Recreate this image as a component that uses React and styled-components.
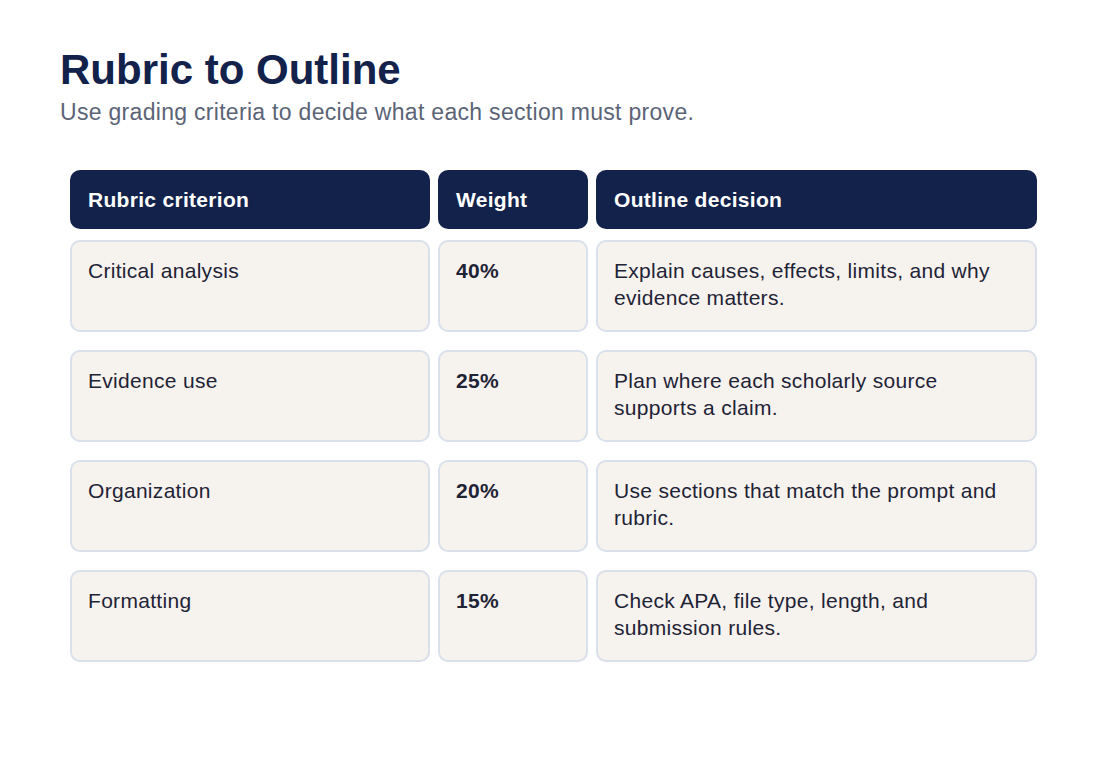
import React from 'react';
import styled, { createGlobalStyle } from 'styled-components';

const GlobalStyle = createGlobalStyle`
  body {
    margin: 0;
    background: #ffffff;
    font-family: "Liberation Sans", Arial, sans-serif;
  }
`;

const Page = styled.div`
  padding: 45px 60px 0;
`;

const Title = styled.h1`
  margin: 0;
  font-size: 42px;
  line-height: 50px;
  font-weight: 700;
  color: #12224b;
`;

const Subtitle = styled.p`
  margin: 3px 0 0;
  font-size: 23px;
  line-height: 28px;
  letter-spacing: 0.3px;
  color: #5b6476;
`;

const Table = styled.div`
  margin: 44px 0 0 10px;
  display: grid;
  grid-template-columns: 360px 150px 441px;
  column-gap: 8px;
  row-gap: 18px;
`;

const HeaderRow = styled.div`
  display: contents;
`;

const Row = styled.div`
  display: contents;
`;

const HeadCell = styled.div`
  box-sizing: border-box;
  height: 59px;
  margin-bottom: -7px;
  padding: 0 18px;
  display: flex;
  align-items: center;
  background: #12224b;
  border-radius: 10px;
  color: #ffffff;
  font-size: 21px;
  letter-spacing: 0.3px;
  font-weight: 700;
`;

const Cell = styled.div`
  box-sizing: border-box;
  height: 92px;
  padding: 15px 16px;
  background: #f6f3ee;
  border: 2px solid #d9e0eb;
  border-radius: 10px;
  color: #1f2336;
  font-size: 21px;
  line-height: 27px;
  letter-spacing: 0.3px;
  font-weight: ${({ strong }) => (strong ? 700 : 400)};
`;

const rows = [
  { criterion: 'Critical analysis', weight: '40%', decision: 'Explain causes, effects, limits, and why evidence matters.' },
  { criterion: 'Evidence use', weight: '25%', decision: 'Plan where each scholarly source supports a claim.' },
  { criterion: 'Organization', weight: '20%', decision: 'Use sections that match the prompt and rubric.' },
  { criterion: 'Formatting', weight: '15%', decision: 'Check APA, file type, length, and submission rules.' }
];

export default function App() {
  return (
    <>
      <GlobalStyle />
      <Page>
        <Title>Rubric to Outline</Title>
        <Subtitle>Use grading criteria to decide what each section must prove.</Subtitle>
        <Table>
          <HeaderRow>
            <HeadCell>Rubric criterion</HeadCell>
            <HeadCell>Weight</HeadCell>
            <HeadCell>Outline decision</HeadCell>
          </HeaderRow>
          {rows.map((row) => (
            <Row key={row.criterion}>
              <Cell>{row.criterion}</Cell>
              <Cell strong>{row.weight}</Cell>
              <Cell>{row.decision}</Cell>
            </Row>
          ))}
        </Table>
      </Page>
    </>
  );
}
